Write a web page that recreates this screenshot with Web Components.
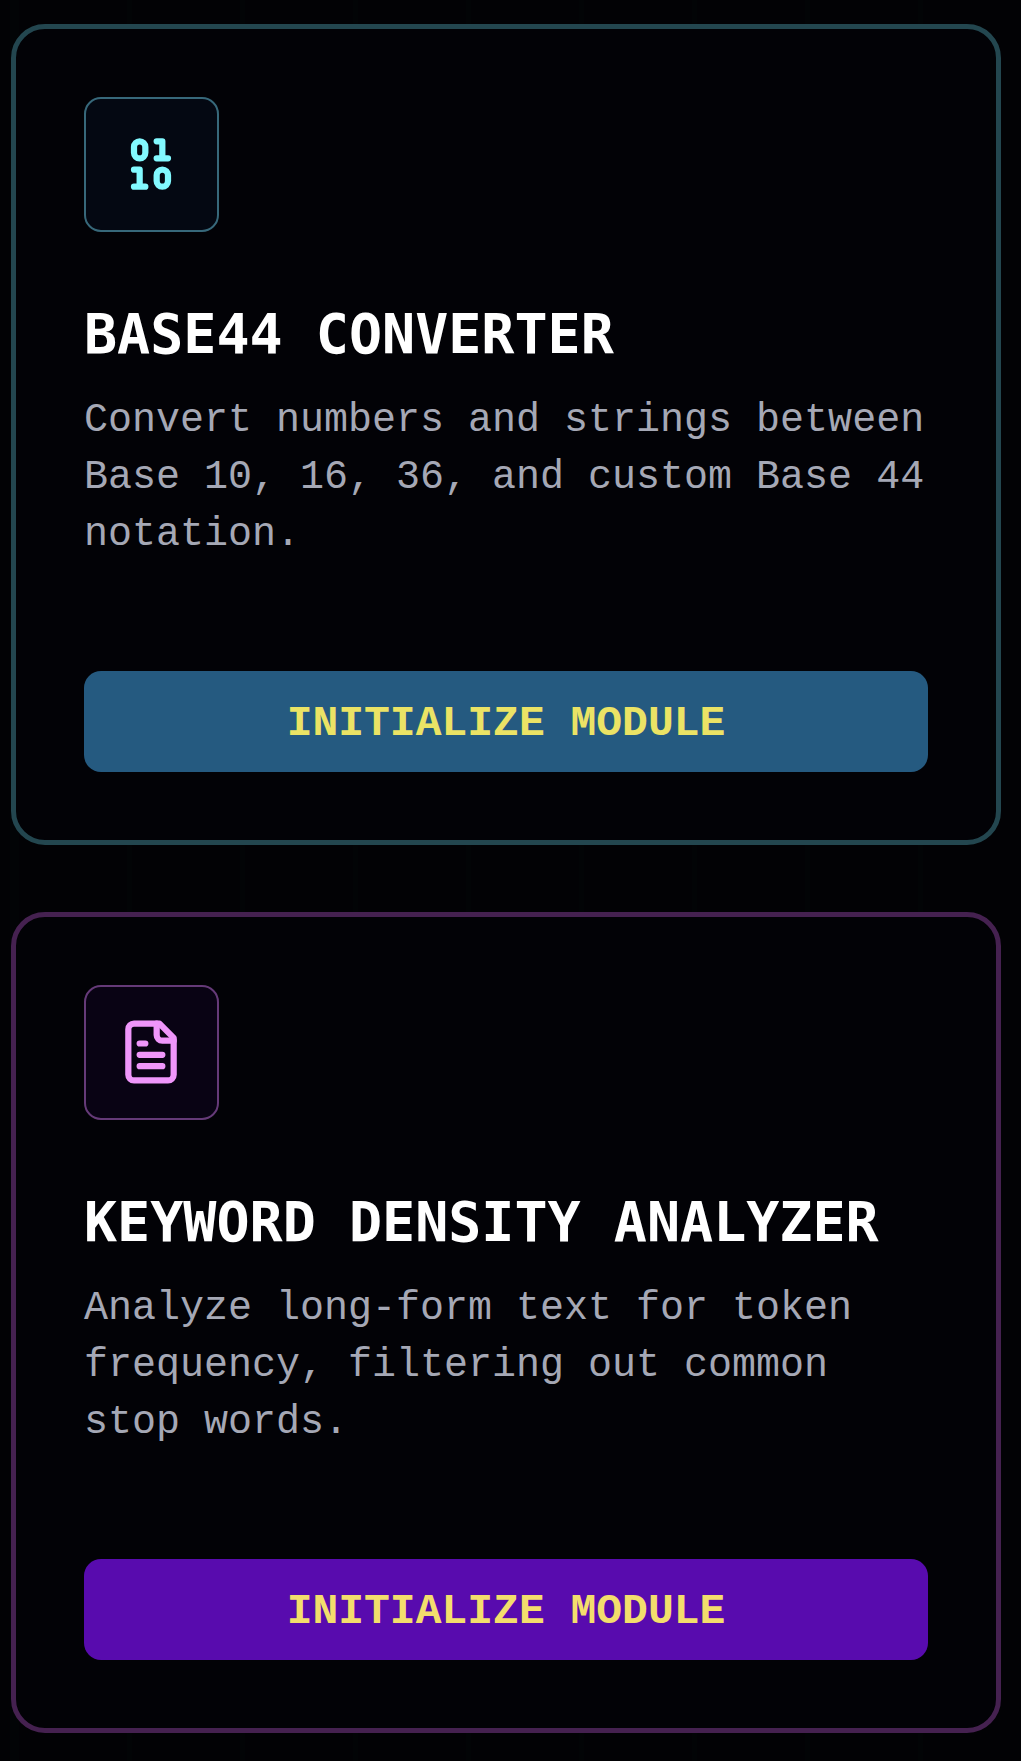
<!DOCTYPE html>
<html lang="en">
<head>
<meta charset="utf-8">
<meta name="viewport" content="width=device-width, initial-scale=1">
<title>Modules</title>
<style>
  body { margin: 0; background: #020205; }
</style>
</head>
<body>
<module-list>
  <module-card tone="cyan">
    <binary-icon slot="icon"></binary-icon>
    <span slot="title">BASE44 CONVERTER</span>
    <span slot="text">Convert numbers and strings between Base 10, 16, 36, and custom Base 44 notation.</span>
    <span slot="action">INITIALIZE MODULE</span>
  </module-card>
  <module-card tone="violet">
    <file-text-icon slot="icon"></file-text-icon>
    <span slot="title">KEYWORD DENSITY ANALYZER</span>
    <span slot="text">Analyze long-form text for token frequency, filtering out common stop words.</span>
    <span slot="action">INITIALIZE MODULE</span>
  </module-card>
</module-list>

<script>
  function define(name, html) {
    const template = document.createElement('template');
    template.innerHTML = html;
    customElements.define(name, class extends HTMLElement {
      constructor() {
        super();
        this.attachShadow({ mode: 'open' }).append(template.content.cloneNode(true));
      }
    });
  }

  const iconStyle = `<style>
    :host { display: block; width: 68px; height: 68px; }
    svg { display: block; width: 100%; height: 100%; fill: none; stroke: currentColor;
      stroke-width: 2.2; stroke-linecap: round; stroke-linejoin: round; }
  </style>`;

  define('binary-icon', iconStyle + `
    <svg viewBox="0 0 24 24" aria-hidden="true">
      <rect x="14" y="14" width="4" height="6" rx="2"/>
      <rect x="6" y="4" width="4" height="6" rx="2"/>
      <path d="M6 20h4M14 10h4M6 14h2v6M14 4h2v6"/>
    </svg>`);

  define('file-text-icon', iconStyle + `
    <svg viewBox="0 0 24 24" aria-hidden="true">
      <path d="M15 2H6a2 2 0 0 0-2 2v16a2 2 0 0 0 2 2h12a2 2 0 0 0 2-2V7Z"/>
      <path d="M14 2v4a2 2 0 0 0 2 2h4M10 9H8M16 13H8M16 17H8"/>
    </svg>`);

  define('module-list', `<style>
    :host {
      display: flex; flex-direction: column; gap: 67px;
      box-sizing: border-box; min-height: 100vh; padding: 24px 20px 28px 11px;
      background: repeating-linear-gradient(90deg, #020406 0 5px, transparent 5px 113px) 14px 0;
    }
  </style><slot></slot>`);

  define('module-card', `<style>
    :host {
      --edge: #23464f; --tile: #040812; --tile-edge: #37687a; --icon: #82f9ff;
      --action: #255a80; --label: #ebe365;
      display: flex; flex-direction: column; align-items: stretch;
      box-sizing: border-box; padding: 68px;
      border: 5px solid var(--edge); border-radius: 34px; background: #020206;
    }
    :host([tone="violet"]) {
      --edge: #452150; --tile: #090314; --tile-edge: #653a78; --icon: #ef96fa;
      --action: #580bae; --label: #f3de6c;
    }
    .tile {
      display: flex; align-self: flex-start; padding: 31px;
      box-sizing: border-box; width: 135px; height: 135px; margin-bottom: 74px;
      border: 2px solid var(--tile-edge); border-radius: 17px;
      background: var(--tile); color: var(--icon);
    }
    h2 {
      margin: 0 0 30px; color: #fff;
      font: bold 55px/56px "DejaVu Sans Mono", monospace;
    }
    p {
      margin: 0 0 108px; color: #a5a8b5;
      font: 40px/57px "Liberation Mono", monospace;
    }
    button {
      width: 100%; margin: 0; padding: 24px 20px 20px; border: 0; border-radius: 17px;
      background: var(--action); color: var(--label); cursor: pointer;
      font: bold 43px/57px "Liberation Mono", monospace;
    }
  </style>
  <div class="tile"><slot name="icon"></slot></div>
  <h2><slot name="title"></slot></h2>
  <p><slot name="text"></slot></p>
  <button type="button"><slot name="action"></slot></button>`);
</script>
</body>
</html>
